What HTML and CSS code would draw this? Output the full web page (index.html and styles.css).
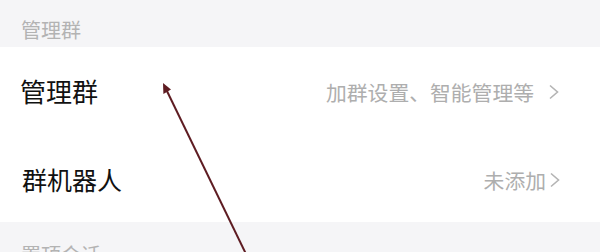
FILE: index.html
```html
<!DOCTYPE html>
<html lang="zh">
<head>
<meta charset="utf-8">
<link rel="stylesheet" href="styles.css">
</head>
<body>
<div class="page">
  <div class="section-title">管理群</div>
  <div class="row row-first">
    <span class="label">管理群</span>
    <span class="value">加群设置、智能管理等<span class="chev wide"><svg width="12" height="16" viewBox="0 0 12 16"><polyline points="2,1.5 9.5,8 2,14.5" fill="none" stroke="#b4b4b4" stroke-width="1.6"/></svg></span></span>
  </div>
  <div class="row row-second">
    <span class="label">群机器人</span>
    <span class="value">未添加<span class="chev"><svg width="12" height="16" viewBox="0 0 12 16"><polyline points="2,1.5 9.5,8 2,14.5" fill="none" stroke="#b4b4b4" stroke-width="1.6"/></svg></span></span>
  </div>
  <div class="section-title section-bottom">置顶会话</div>
  <svg class="arrow" width="600" height="252" viewBox="0 0 600 252">
    <line x1="246" y1="254" x2="165" y2="87" stroke="#5e1c22" stroke-width="2"/>
    <polygon points="163,83 163.4,94 171,89.5" fill="#5e1c22"/>
  </svg>
</div>
</body>
</html>
```

FILE: styles.css
```css
html, body {
  margin: 0;
  padding: 0;
  background: #ffffff;
}
.page {
  position: relative;
  width: 600px;
  height: 252px;
  overflow: hidden;
  font-family: "Noto Sans CJK SC", "Noto Sans", sans-serif;
}
.section-title {
  height: 47px;
  box-sizing: border-box;
  padding: 17px 0 0 21px;
  background: #f5f5f7;
  color: #b3b3b3;
  font-size: 20px;
  line-height: 26px;
}
.section-bottom {
  height: 40px;
  padding-top: 20px;
}
.row {
  display: flex;
  align-items: center;
  justify-content: space-between;
  height: 88px;
  box-sizing: border-box;
  padding: 0 40px 0 20px;
  background: #ffffff;
}
.row-first {
  height: 87px;
  padding-top: 0;
}
.row-second {
  padding-left: 22px;
  padding-right: 39px;
  padding-top: 1px;
}
.label {
  font-size: 26px;
  color: #111111;
  line-height: 30px;
}
.row-second .label {
  font-size: 25px;
}
.value {
  display: flex;
  align-items: center;
  font-size: 20.8px;
  color: #aeaeae;
  line-height: 26px;
  margin-top: 3px;
}
.chev {
  display: flex;
  margin-left: 3px;
}
.chev.wide {
  margin-left: 14px;
}
.arrow {
  position: absolute;
  left: 0;
  top: 0;
}
```
